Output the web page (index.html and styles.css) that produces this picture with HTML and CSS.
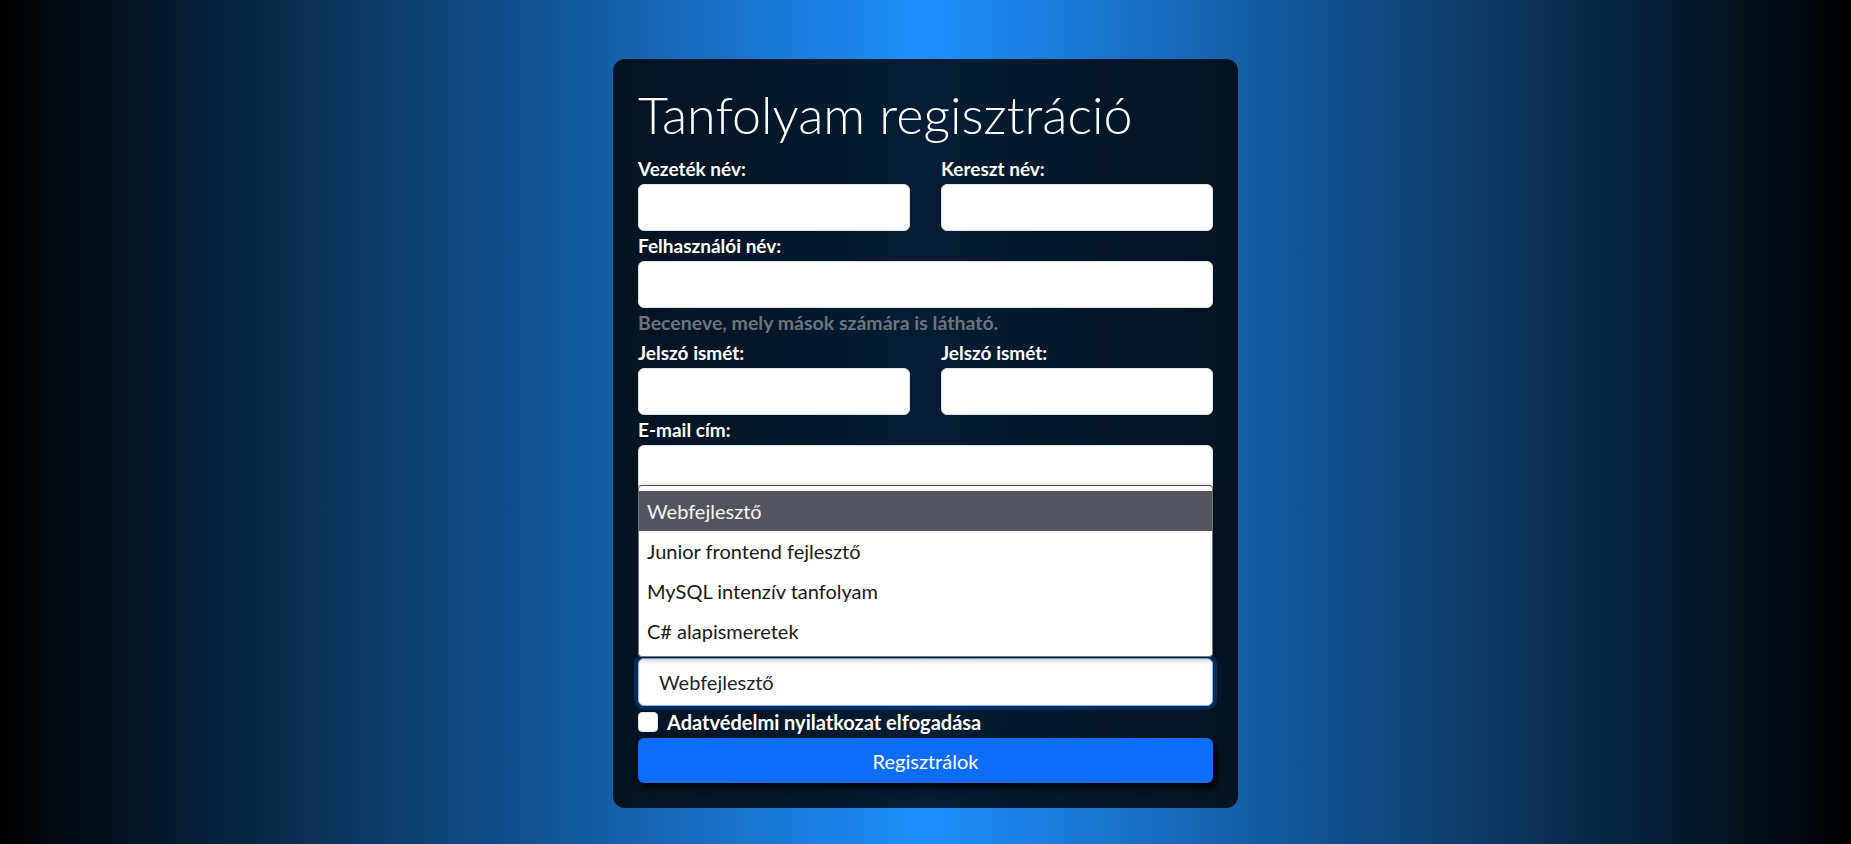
FILE: index.html
```html
<!DOCTYPE html>
<html lang="hu">
<head>
<meta charset="utf-8">
<title>Tanfolyam regisztráció</title>
<link rel="stylesheet" href="styles.css">
</head>
<body>
<main class="page">
  <form class="card">
    <h1 class="title">Tanfolyam regisztráció</h1>
    <div class="row2">
      <div class="field">
        <label class="label" for="vnev">Vezeték név:</label>
        <input class="input" id="vnev" type="text">
      </div>
      <div class="field">
        <label class="label" for="knev">Kereszt név:</label>
        <input class="input" id="knev" type="text">
      </div>
    </div>
    <div class="field">
      <label class="label" for="fnev">Felhasználói név:</label>
      <input class="input" id="fnev" type="text">
      <div class="help">Beceneve, mely mások számára is látható.</div>
    </div>
    <div class="row2">
      <div class="field">
        <label class="label" for="jelszo1">Jelszó ismét:</label>
        <input class="input" id="jelszo1" type="password">
      </div>
      <div class="field">
        <label class="label" for="jelszo2">Jelszó ismét:</label>
        <input class="input" id="jelszo2" type="password">
      </div>
    </div>
    <div class="field">
      <label class="label" for="email">E-mail cím:</label>
      <input class="input" id="email" type="email">
    </div>
    <div class="covered"></div>
    <div class="select-wrap">
      <select class="select" id="tanfolyam">
        <option>Webfejlesztő</option>
        <option>Junior frontend fejlesztő</option>
        <option>MySQL intenzív tanfolyam</option>
        <option>C# alapismeretek</option>
      </select>
      <ul class="options">
        <li class="option active">Webfejlesztő</li>
        <li class="option">Junior frontend fejlesztő</li>
        <li class="option">MySQL intenzív tanfolyam</li>
        <li class="option">C# alapismeretek</li>
      </ul>
    </div>
    <label class="check">
      <input class="check-box" type="checkbox">
      <span>Adatvédelmi nyilatkozat elfogadása</span>
    </label>
    <button class="btn" type="button">Regisztrálok</button>
  </form>
</main>
</body>
</html>
```

FILE: styles.css
```css
* {
  box-sizing: border-box;
}

html, body {
  margin: 0;
  padding: 0;
}

body {
  min-height: 100vh;
  background: linear-gradient(to right, #000000, #1e90ff, #000000);
  font-family: "Lato", "Open Sans", sans-serif;
  color: #ffffff;
}

.page {
  display: flex;
  justify-content: center;
  padding-top: 59px;
  min-height: 100vh;
}

.card {
  width: 625px;
  padding: 25px;
  border-radius: 12px;
  background: rgba(0, 0, 0, 0.8);
  display: flex;
  flex-direction: column;
  align-self: flex-start;
}

.title {
  margin: 0 0 10px;
  font-size: 52px;
  font-weight: 300;
  line-height: 60px;
  color: #ffffff;
}

.row2 {
  display: grid;
  grid-template-columns: 1fr 1fr;
  column-gap: 31px;
}

.field {
  display: flex;
  flex-direction: column;
}

.label {
  font-size: 19px;
  font-weight: 700;
  line-height: 30px;
  color: #ffffff;
}

.input {
  display: block;
  width: 100%;
  height: 47px;
  margin: 0;
  padding: 0 16px;
  border: 1px solid #dee2e6;
  border-radius: 6px;
  background: #ffffff;
  font: inherit;
  font-size: 19px;
  color: #212529;
}

.help {
  font-size: 19.5px;
  font-weight: 700;
  line-height: 30px;
  color: #6c757d;
}

.covered {
  height: 166px;
}

.select-wrap {
  position: relative;
}

.select {
  display: block;
  width: 100%;
  height: 48px;
  margin: 0;
  padding: 0 20px;
  border: 1px solid #86b7fe;
  border-radius: 6px;
  background: #ffffff;
  box-shadow: 0 0 0 4px rgba(13, 110, 253, 0.25);
  font-family: "Lato", "Open Sans", sans-serif;
  font-size: 20px;
  color: #212529;
  -webkit-appearance: none;
  appearance: none;
  outline: none;
}

.options {
  position: absolute;
  left: 0;
  right: 0;
  bottom: calc(100% + 1px);
  margin: 0;
  padding: 5px 0;
  list-style: none;
  background: #ffffff;
  border: 1px solid #767676;
  border-top-color: #4d4d4d;
  border-radius: 4px;
  box-shadow: 2px 2px 6px rgba(0, 0, 0, 0.35);
  z-index: 2;
}

.option {
  height: 40px;
  padding: 0 8px;
  font-size: 20px;
  line-height: 40px;
  color: #1a1a1a;
}

.option.active {
  background: #54545e;
  color: #f5f5f5;
}

.check {
  display: flex;
  align-items: center;
  gap: 9px;
  height: 31px;
  font-size: 20px;
  font-weight: 700;
  color: #ffffff;
}

.check-box {
  -webkit-appearance: none;
  appearance: none;
  width: 20px;
  height: 20px;
  margin: 0;
  border: 1px solid #dee2e6;
  border-radius: 4px;
  background: #ffffff;
  flex: none;
}

.btn {
  margin-top: 1px;
  height: 45px;
  width: 100%;
  border: 0;
  border-radius: 6px;
  background: #0d6efd;
  color: #ffffff;
  font-family: "Lato", "Open Sans", sans-serif;
  font-size: 20px;
  font-weight: 400;
  box-shadow: 4px 5px 6px rgba(0, 0, 0, 0.9);
}
```
